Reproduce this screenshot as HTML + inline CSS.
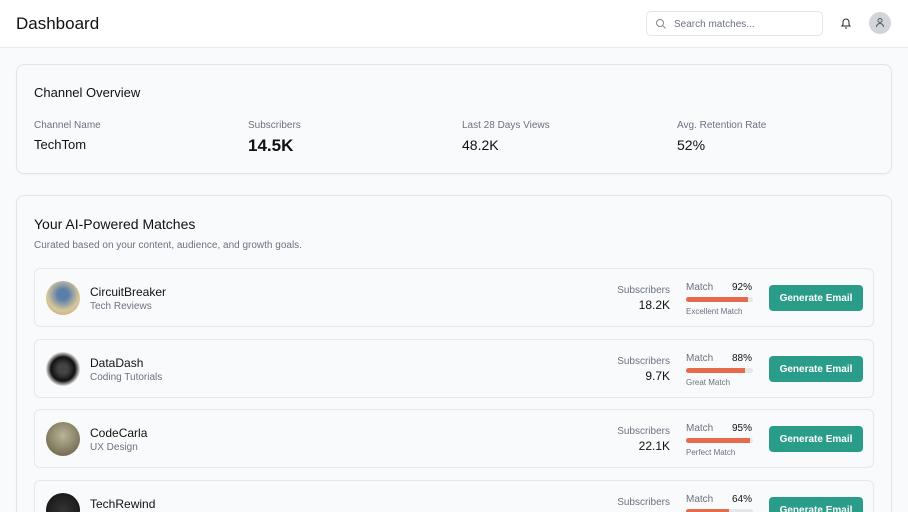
<!DOCTYPE html>
<html style="width:908px;height:512px;overflow:hidden"><head><style>
*{box-sizing:border-box;margin:0;padding:0}
body{width:908px;height:512px;overflow:hidden;background:#f9fafb;font-family:"Liberation Sans",sans-serif;color:#111;position:relative}
.a{position:absolute}
.hdr{left:0;top:0;width:908px;height:48px;background:#fff;border-bottom:1px solid #e8e9ec}
.card{background:#f9fafb;border:1px solid #e3e5e8;border-radius:8px;box-shadow:0 1px 2px rgba(0,0,0,.04)}
.lbl{font-size:10px;color:#6b7280}
.row{left:34px;width:840px;height:59px;border:1px solid #e5e7eb;border-radius:6px;background:#f9fafb}
.av{left:11px;top:12px;width:34px;height:34px;border-radius:50%}
.nm{left:55px;top:16px;font-size:12px;color:#111}
.sub{left:55px;top:32px;font-size:10px;color:#6b7280}
.sl{right:203px;top:16px;font-size:10px;color:#6b7280}
.sv{right:203px;top:29px;font-size:12px;color:#111}
.ml{left:651px;top:13px;font-size:10px;color:#6b7280}
.mp{left:697px;top:13px;font-size:10px;color:#111}
.bar{left:651px;top:28px;width:67px;height:5px;background:#e5e7eb;border-radius:3px;overflow:hidden}
.bar i{display:block;height:100%;background:#e66a4c}
.mt{left:651px;top:38px;font-size:8px;color:#6b7280}
.btn{left:734px;top:16px;width:94px;height:26px;background:#2a9d8a;border-radius:4px;color:#fff;font-size:10px;font-weight:bold;display:flex;align-items:center;justify-content:center}
</style></head><body>
<div class="a hdr">
<div class="a" style="left:16px;top:14px;font-size:17px">Dashboard</div>
<div class="a" style="left:646px;top:11px;width:177px;height:25px;border:1px solid #e3e5e8;border-radius:5px;background:#fff">
<svg class="a" style="left:8px;top:6px" width="12" height="12" viewBox="0 0 12 12" fill="none" stroke="#888" stroke-width="1"><circle cx="5" cy="5" r="3.5"/><path d="M8 8l2.5 2.5"/></svg>
<div class="a" style="left:27px;top:7px;font-size:10px;color:#6b7280">Search matches...</div></div>
<svg class="a" style="left:840px;top:17px" width="12" height="13" viewBox="0 0 12 13" fill="none" stroke="#222" stroke-width="1"><path d="M2 9h8l-1-1.5V5a3 3 0 0 0-6 0v2.5z"/><path d="M5 11h2"/></svg>
<div class="a" style="left:869px;top:12px;width:22px;height:22px;border-radius:50%;background:#d1d5db"></div>
<svg class="a" style="left:875px;top:17px" width="10" height="11" viewBox="0 0 10 11" fill="none" stroke="#555" stroke-width="1"><circle cx="5" cy="3.5" r="2"/><path d="M1.5 10a3.5 3.5 0 0 1 7 0"/></svg>
</div>
<div class="a card" style="left:16px;top:64px;width:876px;height:110px">
<div class="a" style="left:17px;top:20px;font-size:13px">Channel Overview</div>
<div class="a lbl" style="left:17px;top:55px">Channel Name</div><div class="a" style="left:17px;top:72px;font-size:13px">TechTom</div>
<div class="a lbl" style="left:231px;top:55px">Subscribers</div><div class="a" style="left:231px;top:71px;font-size:17px;font-weight:bold">14.5K</div>
<div class="a lbl" style="left:445px;top:55px">Last 28 Days Views</div><div class="a" style="left:445px;top:72px;font-size:14px">48.2K</div>
<div class="a lbl" style="left:660px;top:55px">Avg. Retention Rate</div><div class="a" style="left:660px;top:72px;font-size:14px">52%</div>
</div>
<div class="a card" style="left:16px;top:195px;width:876px;height:317px;border-bottom:none;border-radius:8px 8px 0 0">
<div class="a" style="left:17px;top:20px;font-size:14px">Your AI-Powered Matches</div>
<div class="a lbl" style="left:17px;top:44px">Curated based on your content, audience, and growth goals.</div>
</div>
<div class="a row" style="top:268px"><div class="a av" style="background:radial-gradient(circle at 50% 40%,#5a7fa8 20%,#d8c79a 60%,#b8a27a)"></div><div class="a nm">CircuitBreaker</div><div class="a sub">Tech Reviews</div><div class="a sl">Subscribers</div><div class="a sv">18.2K</div><div class="a ml">Match</div><div class="a mp">92%</div><div class="a bar"><i style="width:92%"></i></div><div class="a mt">Excellent Match</div><div class="a btn">Generate Email</div></div>
<div class="a row" style="top:339px"><div class="a av" style="background:radial-gradient(circle at 50% 50%,#444 20%,#111 50%,#ddd 70%)"></div><div class="a nm">DataDash</div><div class="a sub">Coding Tutorials</div><div class="a sl">Subscribers</div><div class="a sv">9.7K</div><div class="a ml">Match</div><div class="a mp">88%</div><div class="a bar"><i style="width:88%"></i></div><div class="a mt">Great Match</div><div class="a btn">Generate Email</div></div>
<div class="a row" style="top:409px"><div class="a av" style="background:radial-gradient(circle at 50% 40%,#b9b59a,#7a7358 70%)"></div><div class="a nm">CodeCarla</div><div class="a sub">UX Design</div><div class="a sl">Subscribers</div><div class="a sv">22.1K</div><div class="a ml">Match</div><div class="a mp">95%</div><div class="a bar"><i style="width:95%"></i></div><div class="a mt">Perfect Match</div><div class="a btn">Generate Email</div></div>
<div class="a" style="left:34px;top:480px;width:840px;height:32px;overflow:hidden"><div class="a row" style="left:0;top:0;border-bottom:none"><div class="a av" style="background:radial-gradient(circle,#333,#111)"></div><div class="a nm">TechRewind</div><div class="a sl">Subscribers</div><div class="a ml">Match</div><div class="a mp">64%</div><div class="a bar"><i style="width:64%"></i></div><div class="a btn">Generate Email</div></div></div>
</body></html>
